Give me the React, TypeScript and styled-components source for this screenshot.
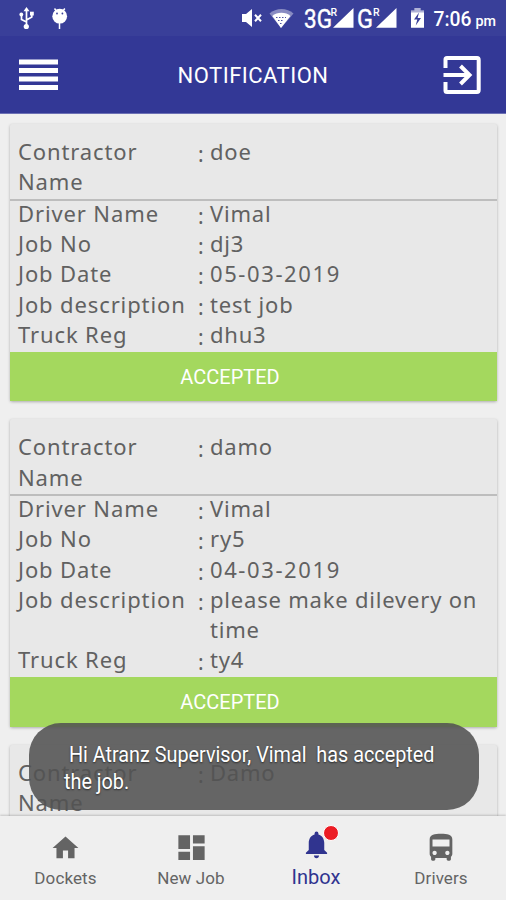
import React from "react";
import styled, { createGlobalStyle } from "styled-components";

const GlobalStyle = createGlobalStyle`
  * { box-sizing: border-box; }
  body { margin: 0; background: #efefef; }
`;

const Screen = styled.div`
  width: 506px;
  height: 900px;
  display: flex;
  flex-direction: column;
  position: relative;
  overflow: hidden;
  background: #efefef;
  font-family: Roboto, "Liberation Sans", sans-serif;
`;

const StatusBar = styled.div`
  flex: none;
  height: 36px;
  display: flex;
  align-items: center;
  background: #393f99;
  color: #fff;
  svg { display: block; flex: none; }
`;

const Toolbar = styled.header`
  flex: none;
  height: 78px;
  padding: 0 25px 0 19px;
  display: flex;
  align-items: center;
  justify-content: space-between;
  background: #333896;
  border-bottom: 1px solid #6c70b4;
  svg { display: block; }
`;

const Title = styled.h1`
  margin: 2px 0 0 5px;
  color: #fff;
  font-size: 22px;
  font-weight: 400;
  line-height: 30px;
  letter-spacing: 0.5px;
`;

const List = styled.main`
  flex: 1;
  min-height: 0;
  overflow: hidden;
  padding: 10px 9px 0 10px;
  display: flex;
  flex-direction: column;
  gap: 18.3px;
`;

const Card = styled.article`
  flex: none;
  background: #e8e8e8;
  border-radius: 2px;
  box-shadow: 0 1px 3px rgba(0, 0, 0, 0.28);
  color: #616161;
  font-family: "Noto Sans", sans-serif;
  font-size: 22px;
  line-height: 30.25px;
  letter-spacing: 0.88px;
`;

const CardHead = styled.div`
  height: 76.6px;
  padding-top: 12px;
  border-bottom: 2px solid #bdbdbd;
`;

const CardBody = styled.div`
  margin-top: -2.8px;
  padding-bottom: 2.5px;
`;

const Field = styled.div`
  display: grid;
  grid-template-columns: 180px 12px 1fr;
  padding: 0 10px 0 8px;
`;

const Colon = styled.span`
  position: relative;
  top: 3px;
  font-size: 21px;
`;

const Value = styled.span<{ $numeric: boolean }>`
  letter-spacing: ${(p) => (p.$numeric ? 1.6 : 0.8)}px;
`;

const Accepted = styled.div`
  height: 49.5px;
  padding: 1px 47px 0 0;
  display: flex;
  align-items: center;
  justify-content: center;
  background: #a4d85e;
  color: #fff;
  font-family: Roboto, sans-serif;
  font-size: 20px;
  letter-spacing: 0;
`;

const Toast = styled.div`
  position: absolute;
  left: 29px;
  top: 723px;
  width: 450px;
  height: 87px;
  padding: 18px 0 0 35px;
  border-radius: 32px;
  background: rgba(82, 82, 82, 0.88);
  color: #fff;
  font-size: 22px;
  line-height: 27px;
  text-shadow: 0 1px 2px rgba(0, 0, 0, 0.6);
`;

const ToastLine = styled.div`
  width: max-content;
  white-space: pre;
  transform: scaleX(0.9);
  transform-origin: left;
`;

const Nav = styled.nav`
  flex: none;
  height: 84px;
  display: grid;
  grid-template-columns: 131px 120px 130px 120px;
  background: #efefef;
  box-shadow: 0 -1px 2px rgba(0, 0, 0, 0.18);
`;

const NavItem = styled.div<{ $active?: boolean }>`
  display: flex;
  flex-direction: column;
  align-items: center;
  padding-top: ${(p) => (p.$active ? 14 : 15)}px;
  color: ${(p) => (p.$active ? "#30348f" : "#646464")};
  font-size: ${(p) => (p.$active ? 20 : 17)}px;
  line-height: 30px;
  letter-spacing: ${(p) => (p.$active ? 0 : 0.1)}px;
  svg { display: block; }
`;

const IconWrap = styled.div`
  position: relative;
`;

const Glyph = styled.div`
  height: 32px;
  display: flex;
  align-items: flex-start;
`;

const Badge = styled.span`
  position: absolute;
  left: 22px;
  top: -5px;
  width: 16px;
  height: 16px;
  border-radius: 50%;
  border: 1px solid #fff;
  background: #ec1c24;
`;

const StatusIcons = () => (
  <svg width="506" height="36" viewBox="0 0 506 36" fill="#fff">
    <g stroke="#fff" strokeWidth="1.7" fill="none">
      <path d="M26.5 11v14M26.5 22l-5-2.6v-4.5M26.5 20l5.3-3v-3.5" />
    </g>
    <path d="M26.5 7l3 4.3h-6z" />
    <circle cx="26.3" cy="26.5" r="2.6" />
    <circle cx="21.3" cy="14.5" r="1.9" />
    <path d="M30 11.7h3.8v3.8H30z" />
    <circle cx="59.7" cy="16.2" r="7.4" />
    <path d="M54.5 8.5l3 4M64.8 8.5l-3 4M59.5 22v7" stroke="#fff" strokeWidth="1.5" />
    <circle cx="57" cy="13.5" r="0.9" fill="#393f99" />
    <circle cx="62.4" cy="13.5" r="0.9" fill="#393f99" />
    <path d="M242 14h4l6-5v18l-6-5h-4z" />
    <path d="M255 14.8l6 6.4M261 14.8l-6 6.4" stroke="#fff" strokeWidth="2" />
    <path d="M269.5 13.5C276 7.5 287 7.5 293.5 13.5L281 28z" opacity="0.4" />
    <path d="M272.3 16C277 11.6 286 11.6 290.4 16L281 28z" />
    <path d="M276 17.5h10M278 20.5h6M280 23.5h3" stroke="#393f99" strokeWidth="0.9" strokeDasharray="1.5 1.5" />
    <path d="M333 27.7L353.5 8v19.7zM376 27.7L396.5 8v19.7z" />
    <path d="M411 10.5h3.5V8h6v2.5h3.5v17.3h-13z" />
    <path d="M411 10.5h3.5V8h6v2.5h3.5v2h-13z" fill="#393f99" opacity="0.4" />
    <path d="M419 12.5l-5 7h3.3l-1.6 6 5.3-7.5h-3.4z" fill="#393f99" />
    <g fontFamily="Roboto, sans-serif">
      <text x="304" y="27.5" fontSize="25.5" textLength="28" lengthAdjust="spacingAndGlyphs" stroke="#fff" strokeWidth="0.4">3G</text>
      <text x="330.5" y="15.5" fontSize="10.5" fontWeight="500">R</text>
      <text x="357" y="27.5" fontSize="25.5" textLength="16" lengthAdjust="spacingAndGlyphs" stroke="#fff" strokeWidth="0.4">G</text>
      <text x="373" y="15.5" fontSize="10.5" fontWeight="500">R</text>
      <text x="433.5" y="26" fontSize="20.5" fontWeight="500" textLength="38" lengthAdjust="spacingAndGlyphs">7:06</text>
      <text x="475.5" y="26" fontSize="14" fontWeight="500" textLength="20.5" lengthAdjust="spacingAndGlyphs">pm</text>
    </g>
  </svg>
);

const MenuIcon = () => (
  <svg width="39" height="31" viewBox="0 0 39 31" fill="#fff">
    <path d="M0 0.5h39v5H0zM0 9h39v5H0zM0 17.5h39v5H0zM0 26h39v5H0z" />
  </svg>
);

const ExitIcon = () => (
  <svg width="38" height="38" viewBox="0 0 38 38" fill="none" stroke="#fff" strokeWidth="4">
    <path d="M2.5 12V3.5Q2.5 2 4 2H34Q35.7 2 35.7 4V34Q35.7 36 34 36H4Q2.5 36 2.5 34.5V26" />
    <path d="M0.5 19H25M17.5 10L26.5 19l-9 9" />
  </svg>
);

const HomeIcon = () => (
  <svg width="31" height="34" viewBox="0 0 24 24" fill="currentColor">
    <path d="M10 20v-6h4v6h5v-8h3L12 3 2 12h3v8z" />
  </svg>
);

const DashboardIcon = () => (
  <svg width="35" height="33" viewBox="0 0 24 24" preserveAspectRatio="none" fill="currentColor">
    <path d="M3 13h8V3H3v10zm0 8h8v-6H3v6zm10 0h8V11h-8v10zm0-18v6h8V3h-8z" />
  </svg>
);

const BellIcon = () => (
  <svg width="31" height="33" viewBox="0 0 24 24" fill="currentColor" preserveAspectRatio="none">
    <path d="M12 22.5c1.1 0 2-.9 2-2h-4c0 1.1.9 2 2 2zm6-6v-5c0-3.1-1.6-5.6-4.5-6.3v-.7a1.5 1.5 0 0 0-3 0v.7C7.6 5.9 6 8.4 6 11.5v5l-2.2 2v1h16.4v-1z" transform="translate(0 -2)" />
  </svg>
);

const BusIcon = () => (
  <svg width="34" height="34" viewBox="0 0 24 24" fill="currentColor">
    <path d="M4 16c0 .88.39 1.67 1 2.22V20c0 .55.45 1 1 1h1c.55 0 1-.45 1-1v-1h8v1c0 .55.45 1 1 1h1c.55 0 1-.45 1-1v-1.78c.61-.55 1-1.34 1-2.22V6c0-3.5-3.58-4-8-4s-8 .5-8 4v10zm3.5 1c-.83 0-1.5-.67-1.5-1.5S6.67 14 7.5 14s1.5.67 1.5 1.5S8.33 17 7.5 17zm9 0c-.83 0-1.5-.67-1.5-1.5s.67-1.5 1.5-1.5 1.5.67 1.5 1.5-.67 1.5-1.5 1.5zm1.5-6H6V6h12v5z" />
  </svg>
);

interface Job {
  contractor: string;
  fields: [string, string][];
}

const jobs: Job[] = [
  {
    contractor: "doe",
    fields: [
      ["Driver Name", "Vimal"],
      ["Job No", "dj3"],
      ["Job Date", "05-03-2019"],
      ["Job description", "test job"],
      ["Truck Reg", "dhu3"],
    ],
  },
  {
    contractor: "damo",
    fields: [
      ["Driver Name", "Vimal"],
      ["Job No", "ry5"],
      ["Job Date", "04-03-2019"],
      ["Job description", "please make dilevery on time"],
      ["Truck Reg", "ty4"],
    ],
  },
  { contractor: "Damo", fields: [] },
];

const Row = ({ label, value }: { label: React.ReactNode; value: string }) => (
  <Field>
    <span>{label}</span>
    <Colon>:</Colon>
    <Value $numeric={/^\d/.test(value)}>{value}</Value>
  </Field>
);

export default function App() {
  return (
    <Screen>
      <GlobalStyle />
      <StatusBar>
        <StatusIcons />
      </StatusBar>
      <Toolbar>
        <MenuIcon />
        <Title>NOTIFICATION</Title>
        <ExitIcon />
      </Toolbar>
      <List>
        {jobs.map((job) => (
          <Card key={job.contractor}>
            <CardHead>
              <Row label={<>Contractor<br />Name</>} value={job.contractor} />
            </CardHead>
            {job.fields.length > 0 && (
              <>
                <CardBody>
                  {job.fields.map(([label, value]) => (
                    <Row key={label} label={label} value={value} />
                  ))}
                </CardBody>
                <Accepted>ACCEPTED</Accepted>
              </>
            )}
          </Card>
        ))}
      </List>
      <Nav>
        <NavItem>
          <Glyph><HomeIcon /></Glyph>
          Dockets
        </NavItem>
        <NavItem>
          <Glyph><DashboardIcon /></Glyph>
          New Job
        </NavItem>
        <NavItem $active>
          <Glyph>
            <IconWrap>
              <BellIcon />
              <Badge />
            </IconWrap>
          </Glyph>
          Inbox
        </NavItem>
        <NavItem>
          <Glyph><BusIcon /></Glyph>
          Drivers
        </NavItem>
      </Nav>
      <Toast>
        <ToastLine> Hi Atranz Supervisor, Vimal  has accepted</ToastLine>
        <ToastLine>the job.</ToastLine>
      </Toast>
    </Screen>
  );
}
